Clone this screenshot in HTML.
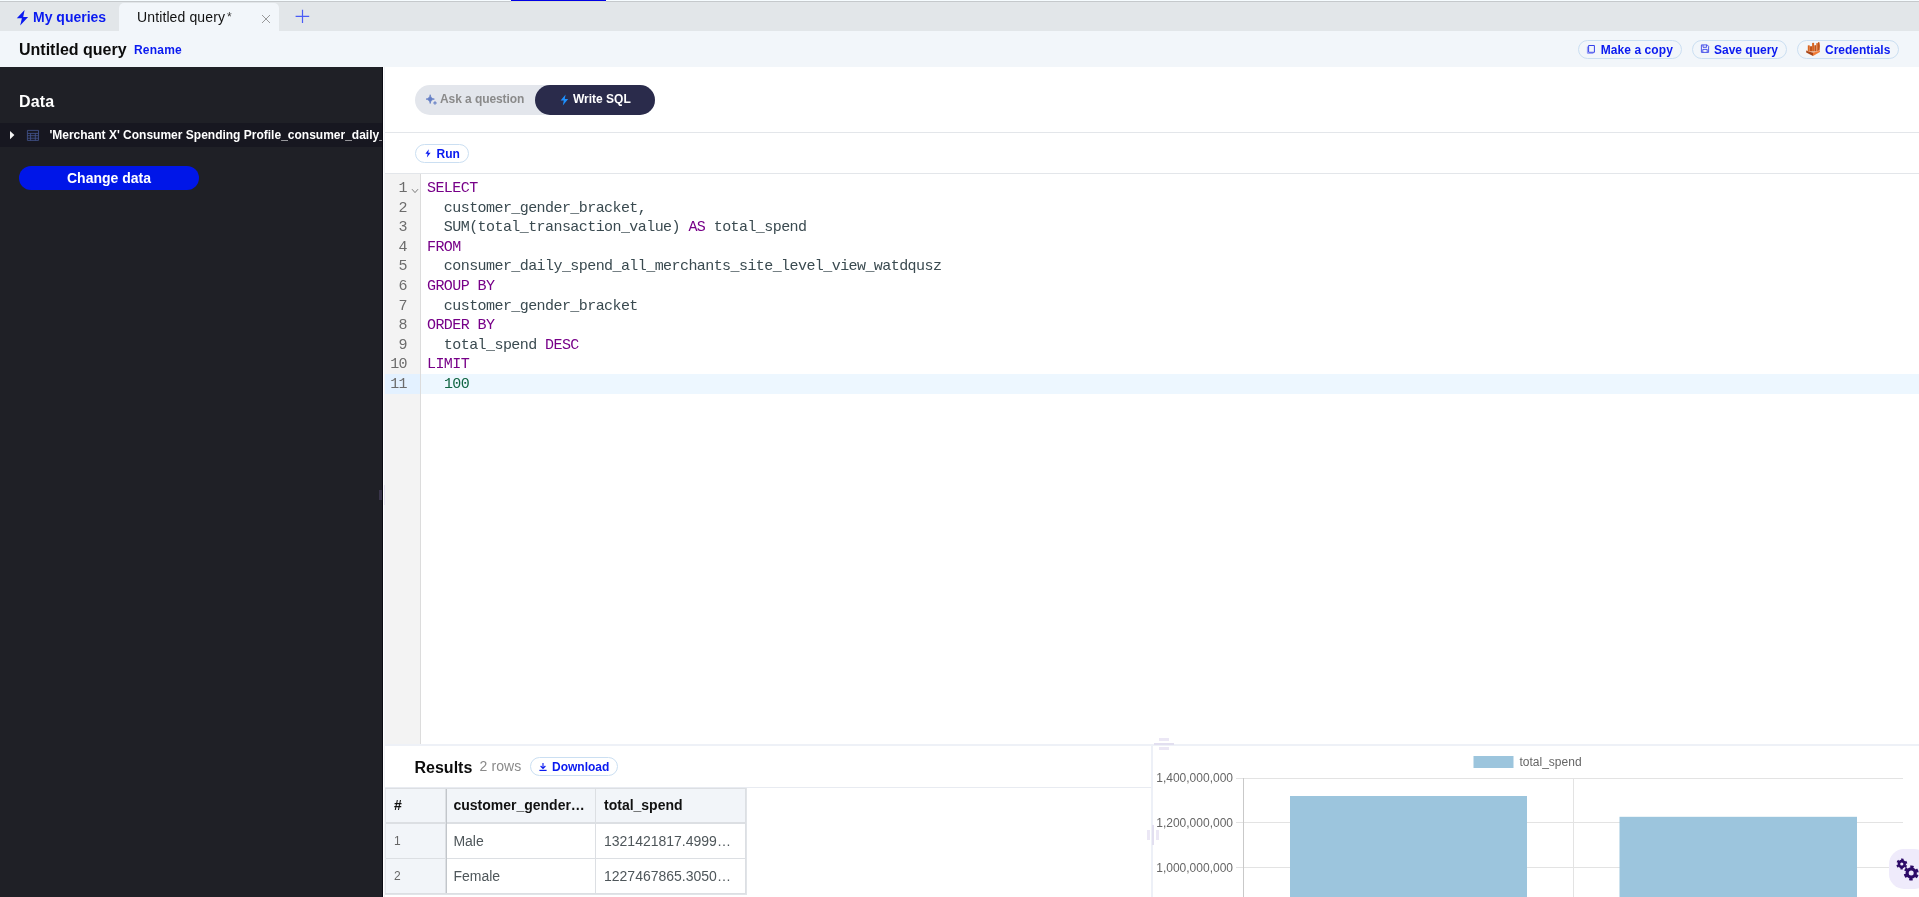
<!DOCTYPE html>
<html>
<head>
<meta charset="utf-8">
<title>Untitled query</title>
<style>
*{box-sizing:border-box;margin:0;padding:0}
html,body{width:1919px;height:897px;overflow:hidden;background:#fff}
body{font-family:"Liberation Sans",sans-serif;position:relative;color:#111;will-change:transform}
.abs{position:absolute}
.b{font-weight:bold}
.blue{color:#0a1af0}
/* top */
#topline{left:0;top:0;width:1919px;height:1px;background:#f6fcff}
#topprog{left:511px;top:0;width:95px;height:1px;background:#0000e6}
#topline2{left:0;top:1px;width:1919px;height:1px;background:linear-gradient(90deg,#c5c9cc 0,#c5c9cc 511px,#dcdfd2 511px,#dcdfd2 606px,#c5c9cc 606px)}
#tabbar{left:0;top:2px;width:1919px;height:29px;background:#e2e6e9}
#acttab{left:119px;top:3px;width:160px;height:28px;background:#f2f6fa;border-radius:5px 5px 0 0}
#header{left:0;top:31px;width:1919px;height:36px;background:#f2f6fa}
.t{white-space:pre;line-height:1}
.pill{border:1px solid #cbdff2;border-radius:10px;height:19px}
/* sidebar */
#sidebar{left:0;top:67px;width:383px;height:830px;background:#1f2026;overflow:hidden}
#dsrow{left:0;top:56px;width:383px;height:24px;background:#171720}
#chg{left:19px;top:99px;width:180px;height:24px;border-radius:12px;background:#0016e8}
/* main */
#split{left:383px;top:67px;width:2px;height:830px;background:linear-gradient(90deg,#fff 0,#fff 1px,#f1f3f7 1px,#f1f3f7 2px)}
.hl{height:1px;background:#e3e6ea}
#tog{left:415px;top:85px;width:240px;height:30px;border-radius:15px;background:#e3e6ec}
#togact{left:535px;top:85px;width:120px;height:30px;border-radius:15px;background:#2a2b4b}
/* editor */
#gutter{left:385px;top:174px;width:35px;height:570px;background:#f3f3f3}
#gutline{left:420px;top:174px;width:1px;height:570px;background:#dcdcdc}
#actline{left:421px;top:374px;width:1498px;height:20px;background:#edf7ff}
#actgut{left:385px;top:374px;width:35px;height:20px;background:#e3f1ff}
.code{font-family:"Liberation Mono",monospace;font-size:15px;letter-spacing:-0.57px;line-height:19.6px;white-space:pre;color:#3a4a50}
.ln{color:#6c6c6c;text-align:right}
.k{color:#770088}
.n{color:#116644}
/* table */
.cell{font-size:14px;color:#4e565a;white-space:pre;line-height:1}
</style>
</head>
<body>
<!-- top bar -->
<div class="abs" id="topline"></div>
<div class="abs" id="topprog"></div>
<div class="abs" id="topline2"></div>
<div class="abs" id="tabbar"></div>
<div class="abs" id="acttab"></div>
<div class="abs" id="header"></div>

<svg class="abs" style="left:16px;top:9px" width="13" height="18" viewBox="0 0 13 18"><path d="M8.6 0.9 L0.8 9.2 H5.9 L4.2 16.6 L12.1 8 H7.2 Z" fill="#0a1af0"/></svg>
<div class="abs t b blue" style="left:33px;top:10px;font-size:14px">My queries</div>
<div class="abs t" style="left:137px;top:10px;font-size:14px;color:#111;letter-spacing:0.12px">Untitled query<span style="margin-left:2px;font-size:12px;color:#333;position:relative;top:-1px">*</span></div>
<svg class="abs" style="left:261px;top:14px" width="10" height="10" viewBox="0 0 10 10"><path d="M1 1 L9 9 M9 1 L1 9" stroke="#8e8e8e" stroke-width="0.9" fill="none"/></svg>
<svg class="abs" style="left:295px;top:9px" width="15" height="15" viewBox="0 0 15 15"><path d="M7.5 0.8 V14 M0.6 7.4 H14.2" stroke="#4a5cf6" stroke-width="1.2" fill="none"/></svg>

<div class="abs t b" style="left:19px;top:42px;font-size:16px;color:#0c0c0c">Untitled query</div>
<div class="abs t b blue" style="left:134px;top:44px;font-size:12px;letter-spacing:0.2px">Rename</div>

<!-- header buttons -->
<div class="abs pill" style="left:1578px;top:40px;width:104px"></div>
<svg class="abs" style="left:1586px;top:45px" width="10" height="10" viewBox="0 0 10 10"><path d="M2.600 0.500 H8.400 V7.300 H2.600 Z" fill="none" stroke="#3540ea" stroke-width="1" stroke-linejoin="miter"/><path d="M1.400 1.500 V8.300 H7.400" fill="none" stroke="#8a92f4" stroke-width="1"/></svg>
<div class="abs t b blue" style="left:1600.700px;top:44px;font-size:12px;letter-spacing:0.08px">Make a copy</div>

<div class="abs pill" style="left:1692px;top:40px;width:95px"></div>
<svg class="abs" style="left:1700px;top:44.400px" width="10" height="10" viewBox="0 0 10 10"><path d="M1.4 0.9 H7.2 L8.6 2.3 V8.4 H1.4 Z" fill="none" stroke="#3a45e8" stroke-width="0.9"/><path d="M3 1 V3.3 H6.6 V1 M2.8 8.3 V5.4 H7.2 V8.3" fill="none" stroke="#3a45e8" stroke-width="0.9"/></svg>
<div class="abs t b blue" style="left:1714px;top:44px;font-size:12px">Save query</div>

<div class="abs pill" style="left:1797px;top:40px;width:102px"></div>
<svg class="abs" style="left:1805px;top:41px" width="16" height="16" viewBox="0 0 16 16"><path d="M2.800 4.600 Q3.800 4 4.800 4.600 V10.200 H2.800 Z M7.100 2.100 Q8.100 1.500 9.100 2.100 V10.600 H7.100 Z M11.300 2.300 Q12.100 1.700 12.900 2.300 V10 H11.300 Z" fill="#d9641f"/><path d="M5 5.400 Q6 4.800 7.100 5.400 V10.600 H5 Z M9.300 4.400 Q10.200 3.800 11 4.400 V10.400 H9.300 Z M12.900 1.400 Q13.900 0.600 14.500 1.600 Q15.300 5 14.600 9.400 L12.900 10 Z" fill="#c0551c"/><path d="M1.200 9.200 L8 11.200 L14.900 9.200 L14.900 9.900 L8 12 L1.200 9.900 Z" fill="#f6a374"/><path d="M1.200 9.700 L8 11.700 V15.100 L1.200 11.400 Z" fill="#a8481a"/><path d="M8 11.700 L14.900 9.700 V11 L8 15.100 Z" fill="#f27a33"/></svg>
<div class="abs t b blue" style="left:1825px;top:44px;font-size:12px">Credentials</div>

<!-- sidebar -->
<div class="abs" id="sidebar">
  <div class="abs t b" style="left:19px;top:27px;font-size:16px;color:#fff;letter-spacing:0.15px">Data</div>
  <div class="abs" id="dsrow"></div>
  <svg class="abs" style="left:9px;top:63px" width="6" height="10" viewBox="0 0 6 10"><path d="M1 0.900 L5.400 5.050 L1 9.200 Z" fill="#f4f4f4"/></svg>
  <svg class="abs" style="left:26px;top:62px" width="14" height="13" viewBox="0 0 14 13"><path d="M1.400 1.400 H12.500 V11.400 H1.400 Z M1.400 4.400 H12.500 M1.400 6.700 H12.500 M1.400 9.200 H12.500 M4.600 4.400 V11.400 M9.300 4.400 V11.400" fill="none" stroke="#43548c" stroke-width="0.850"/></svg>
  <div class="abs t b" style="left:49.400px;top:62px;font-size:12px;color:#fff">'Merchant X' Consumer Spending Profile_consumer_daily_spend_all_merchants_site_level_view</div>
  <div class="abs" id="chg"></div>
  <div class="abs t b" style="left:67px;top:104px;font-size:14px;color:#fff">Change data</div>
</div>
<div class="abs" id="split"></div>
<div class="abs" style="left:382px;top:67px;width:1px;height:830px;background:#0b0b14"></div>
<div class="abs" style="left:379px;top:490px;width:3px;height:10px;background:#39354a"></div>
<div class="abs" style="left:384px;top:485px;width:2px;height:20px;background:#e3e1ef"></div>
<div class="abs" style="left:388px;top:490px;width:3px;height:10px;background:#e1dfed"></div>

<!-- mode toggle -->
<div class="abs" id="tog"></div>
<div class="abs" id="togact"></div>
<svg class="abs" style="left:425px;top:94px" width="13" height="13" viewBox="0 0 13 13"><path d="M5.200 0.700 C5.700 3.400 6.700 4.500 9.400 5.100 C6.700 5.700 5.700 6.800 5.200 9.500 C4.700 6.800 3.700 5.700 1 5.100 C3.700 4.500 4.700 3.400 5.200 0.700 Z" fill="#6680c6" stroke="#6680c6" stroke-width="0.700" stroke-linejoin="round"/><path d="M10 7.100 C10.200 8.300 10.700 8.800 11.900 9 C10.700 9.200 10.200 9.700 10 10.900 C9.800 9.700 9.300 9.200 8.100 9 C9.300 8.800 9.800 8.300 10 7.100 Z" fill="#6680c6" stroke="#6680c6" stroke-width="0.400" stroke-linejoin="round"/></svg>
<div class="abs t b" style="left:440px;top:93px;font-size:12px;color:#8a8a8a;letter-spacing:-0.08px">Ask a question</div>
<svg class="abs" style="left:560px;top:94px" width="9" height="12" viewBox="0 0 9 12"><path d="M5.6 0.4 L0.6 6.6 H3.8 L2.8 11.6 L8.2 5 H4.8 Z" fill="#1e90ff"/></svg>
<div class="abs t b" style="left:573px;top:93px;font-size:12px;color:#fff">Write SQL</div>

<div class="abs hl" style="left:385px;top:132px;width:1534px"></div>

<!-- run -->
<div class="abs pill" style="left:415px;top:144px;width:54px;background:#fff"></div>
<svg class="abs" style="left:425px;top:149px" width="6" height="9" viewBox="0 0 6 9"><path d="M3.8 0.3 L0.4 4.8 H2.6 L1.9 8.6 L5.6 3.8 H3.3 Z" fill="#0a1af0"/></svg>
<div class="abs t b blue" style="left:436.500px;top:148px;font-size:12px">Run</div>

<div class="abs hl" style="left:385px;top:173px;width:1534px"></div>

<!-- editor -->
<div class="abs" id="gutter"></div>
<div class="abs" id="gutline"></div>
<div class="abs" id="actline"></div>
<div class="abs" id="actgut"></div>
<div class="abs code ln" style="left:384px;top:179px;width:23px">1
2
3
4
5
6
7
8
9
10
11</div>
<svg class="abs" style="left:411px;top:188px" width="8" height="6" viewBox="0 0 8 6"><path d="M1 1.2 L4 4.6 L7 1.2" fill="none" stroke="#6c6c6c" stroke-width="0.9"/></svg>
<div class="abs code" style="left:427px;top:179px"><span class="k">SELECT</span>
  customer_gender_bracket,
  SUM(total_transaction_value) <span class="k">AS</span> total_spend
<span class="k">FROM</span>
  consumer_daily_spend_all_merchants_site_level_view_watdqusz
<span class="k">GROUP BY</span>
  customer_gender_bracket
<span class="k">ORDER BY</span>
  total_spend <span class="k">DESC</span>
<span class="k">LIMIT</span>
  <span class="n">100</span></div>

<!-- results -->
<div class="abs" style="left:385px;top:744px;width:1534px;height:2px;background:#eef1f7"></div>
<div class="abs t b" style="left:414.500px;top:760px;font-size:16px;color:#0c0c0c">Results</div>
<div class="abs t" style="left:479.500px;top:758.800px;font-size:14px;color:#8a8a8a;letter-spacing:0.1px">2 rows</div>
<div class="abs pill" style="left:530px;top:757px;width:88px;background:#fff"></div>
<svg class="abs" style="left:538px;top:762px" width="10" height="10" viewBox="0 0 10 10"><path d="M5 1 V6.200 M2.600 4 L5 6.400 L7.400 4" fill="none" stroke="#0a1af0" stroke-width="1.100"/><path d="M1.400 8.400 H8.600" stroke="#0a1af0" stroke-width="1.200"/></svg>
<div class="abs t b blue" style="left:552px;top:761px;font-size:12px">Download</div>

<!-- table -->
<div class="abs" style="left:385px;top:787px;width:766px;height:1px;background:#e8ebf1"></div>
<div class="abs" style="left:385px;top:788px;width:361.700px;height:106.800px;background:#e1e4e8"></div>
<div class="abs" style="left:385px;top:788px;width:361px;height:105.800px;background:#dcdfe3"></div>
<div class="abs" style="left:386px;top:789px;width:59.400px;height:33.400px;background:#f2f5f9"></div>
<div class="abs" style="left:447.400px;top:789px;width:147.600px;height:33.400px;background:#f2f5f9"></div>
<div class="abs" style="left:596px;top:789px;width:149px;height:33.400px;background:#f2f5f9"></div>
<div class="abs" style="left:386px;top:823.500px;width:59.400px;height:34.300px;background:#f2f5f9"></div>
<div class="abs" style="left:447.400px;top:823.500px;width:147.600px;height:34.300px;background:#fff"></div>
<div class="abs" style="left:596px;top:823.500px;width:149px;height:34.300px;background:#fff"></div>
<div class="abs" style="left:386px;top:858.900px;width:59.400px;height:33.700px;background:#f2f5f9"></div>
<div class="abs" style="left:447.400px;top:858.900px;width:147.600px;height:33.700px;background:#fff"></div>
<div class="abs" style="left:596px;top:858.900px;width:149px;height:33.700px;background:#fff"></div>
<div class="abs" style="left:445.400px;top:789px;width:1px;height:104px;background:#dde0e4"></div>
<div class="abs" style="left:446.300px;top:789px;width:1.100px;height:104px;background:#c2c6cb"></div>
<div class="abs" style="left:385px;top:789px;width:1px;height:104px;background:#e4e7eb"></div>

<div class="abs cell b" style="left:394px;top:798px;color:#111">#</div>
<div class="abs cell b" style="left:453.400px;top:798px;color:#111">customer_gender…</div>
<div class="abs cell b" style="left:604px;top:798px;color:#111">total_spend</div>
<div class="abs cell" style="left:394px;top:835px;font-size:12px;color:#666">1</div>
<div class="abs cell" style="left:453.400px;top:834px">Male</div>
<div class="abs cell" style="left:604px;top:834px">1321421817.4999…</div>
<div class="abs cell" style="left:394px;top:870px;font-size:12px;color:#666">2</div>
<div class="abs cell" style="left:453.400px;top:869px">Female</div>
<div class="abs cell" style="left:604px;top:869px">1227467865.3050…</div>

<!-- chart -->
<div class="abs" style="left:1151px;top:746px;width:2px;height:151px;background:#edf0f7"></div>
<svg class="abs" style="left:1153px;top:745px" width="766" height="152" viewBox="0 0 766 152">
  <g stroke="#e3e3e3" stroke-width="1" fill="none">
    <path d="M83 33.500 H750 M83 77.500 H750 M83 122.500 H750"/>
    <path d="M420.500 33 V152"/>
  </g>
  <path d="M90.500 33 V152" stroke="#c9c9c9" stroke-width="1" fill="none"/>
  <rect x="137" y="51" width="237" height="101" fill="#9cc5dd"/>
  <rect x="466.500" y="71.800" width="237.500" height="81" fill="#9cc5dd"/>
  <rect x="320.500" y="11" width="40" height="12" fill="#9cc5dd"/>
  <g font-family="Liberation Sans" font-size="12" fill="#666">
    <text x="366.500" y="20.700">total_spend</text>
    <text x="80" y="37" text-anchor="end">1,400,000,000</text>
    <text x="80" y="82" text-anchor="end">1,200,000,000</text>
    <text x="80" y="127" text-anchor="end">1,000,000,000</text>
  </g>
</svg>
<!-- drag handles -->
<div class="abs" style="left:1159px;top:738px;width:10px;height:3px;background:#ebe7f5"></div>
<div class="abs" style="left:1154px;top:743px;width:20px;height:2px;background:#e2dff0"></div>
<div class="abs" style="left:1159px;top:747px;width:10px;height:3px;background:#ebe7f5"></div>
<div class="abs" style="left:1147px;top:830px;width:3px;height:10px;background:#ebe7f5"></div>
<div class="abs" style="left:1152px;top:825px;width:2px;height:20px;background:#e2dff0"></div>
<div class="abs" style="left:1156px;top:830px;width:3px;height:10px;background:#ebe7f5"></div>

<!-- gear bubble -->
<div class="abs" style="left:1889px;top:849px;width:40px;height:40px;border-radius:15px;background:#efebfb"></div>
<svg class="abs" style="left:1894px;top:856px" width="25" height="26" viewBox="0 0 25 26">
  <g fill="none" stroke="#2c0a66">
    <circle cx="7.800" cy="8" r="2.900" stroke-width="2.600"/>
    <circle cx="7.800" cy="8" r="4.600" stroke-width="1.800" stroke-dasharray="2.400 2.417" transform="rotate(15.050 7.800 8)"/>
    <circle cx="17.200" cy="17" r="4.100" stroke-width="3.200"/>
    <circle cx="17.200" cy="17" r="6.300" stroke-width="2.400" stroke-dasharray="3.400 3.197" transform="rotate(14.540 17.200 17)"/>
  </g>
</svg>
</body>
</html>
